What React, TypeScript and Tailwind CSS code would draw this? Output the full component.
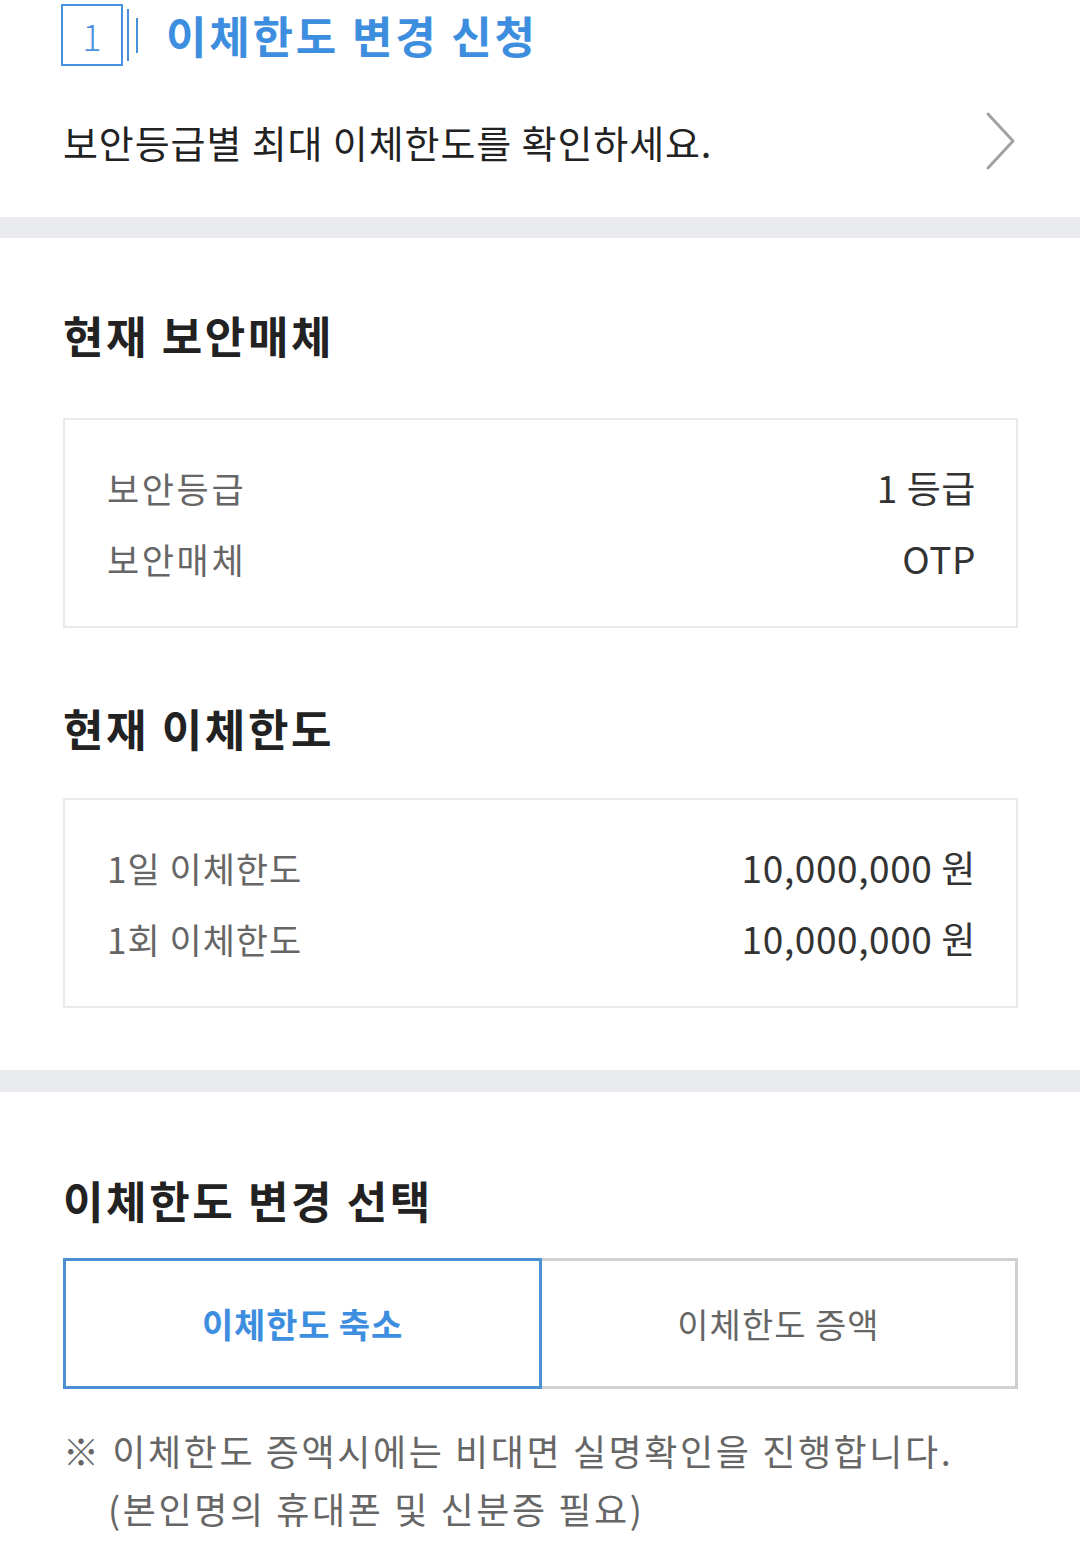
import { ReactNode } from 'react';

const font = { fontFamily: '"Noto Sans CJK KR", "Noto Sans", sans-serif' };

function InfoRow({ label, value, wide }: { label: string; value: string; wide?: boolean }) {
  return (
    <div className="flex h-[50px] items-center justify-between">
      <span className={`text-[35px] text-[#666] ${wide ? 'tracking-[2.6px]' : 'tracking-[1px]'}`}>{label}</span>
      <span className="mr-[-1px] text-[37px] tracking-[0.6px] text-[#333]">{value}</span>
    </div>
  );
}

function InfoBox({ children }: { children: ReactNode }) {
  return (
    <div className="flex flex-col gap-[21px] border-2 border-[#e9e9e9] pt-[43px] pb-[42px] pl-[42px] pr-[41px]">
      {children}
    </div>
  );
}

function SectionTitle({ children, className }: { children: ReactNode; className: string }) {
  return (
    <h2 className={`flex h-[50px] items-center text-[44px] font-bold tracking-[2.6px] text-[#222] ${className}`}>
      {children}
    </h2>
  );
}

export default function App() {
  return (
    <div className="min-h-[1560px] w-[1080px] bg-white" style={font}>
      <section className="pl-[63px] pr-[62px]">
        <div className="-ml-[2px] flex h-[65px] items-center pt-[5px]">
          <div className="flex h-[62px] w-[62px] items-center justify-center border-2 border-[#4a90e0] text-[36px] font-light text-[#4a90e0]">
            1
          </div>
          <div className="ml-[4px] h-[52px] w-[2px] bg-[#4a90e0]" />
          <div className="ml-[7px] h-[35px] w-[2px] bg-[#4a90e0]" />
          <h1 className="ml-[28px] text-[44px] font-bold tracking-[2.8px] text-[#3e8ee0]">
            이체한도 변경 신청
          </h1>
        </div>
        <div className="flex h-[152px] items-center justify-between">
          <p className="text-[38px] tracking-[0.9px] text-[#222]">
            보안등급별 최대 이체한도를 확인하세요.
          </p>
          <svg width="34" height="60" viewBox="0 0 34 60" className="mr-[1px]">
            <polyline points="5,3 30,30 5,57" fill="none" stroke="#a2a2a2" strokeWidth="3" strokeLinecap="round" strokeLinejoin="round" />
          </svg>
        </div>
      </section>

      <div className="h-[21px] bg-[#e9ebee]" />

      <section className="pl-[63px] pr-[62px] pb-[62px]">
        <SectionTitle className="mt-[72px] mb-[58px]">현재 보안매체</SectionTitle>
        <InfoBox>
          <InfoRow label="보안등급" value="1 등급" wide />
          <InfoRow label="보안매체" value="OTP" wide />
        </InfoBox>
        <SectionTitle className="mt-[75px] mb-[45px]">현재 이체한도</SectionTitle>
        <InfoBox>
          <InfoRow label="1일 이체한도" value="10,000,000 원" />
          <InfoRow label="1회 이체한도" value="10,000,000 원" />
        </InfoBox>
      </section>

      <div className="h-[22px] bg-[#e9ebee]" />

      <section className="pl-[63px] pr-[62px]">
        <SectionTitle className="mt-[83px] mb-[33px]">이체한도 변경 선택</SectionTitle>
        <div className="flex h-[131px]">
          <button
            type="button"
            className="flex flex-1 items-center justify-center border-[3px] border-[#4a90d2] text-[34px] font-bold tracking-[0.8px] text-[#3e8ee0]"
          >
            이체한도 축소
          </button>
          <button
            type="button"
            className="flex flex-1 items-center justify-center border-[3px] border-l-0 border-[#d0d0d0] text-[34px] tracking-[1px] text-[#666]"
          >
            이체한도 증액
          </button>
        </div>
        <div className="mt-[32px] text-[36px] leading-[58px] tracking-[2.6px] text-[#666]">
          <p>※ 이체한도 증액시에는 비대면 실명확인을 진행합니다.</p>
          <p className="pl-[45px]">(본인명의 휴대폰 및 신분증 필요)</p>
        </div>
      </section>
    </div>
  );
}
